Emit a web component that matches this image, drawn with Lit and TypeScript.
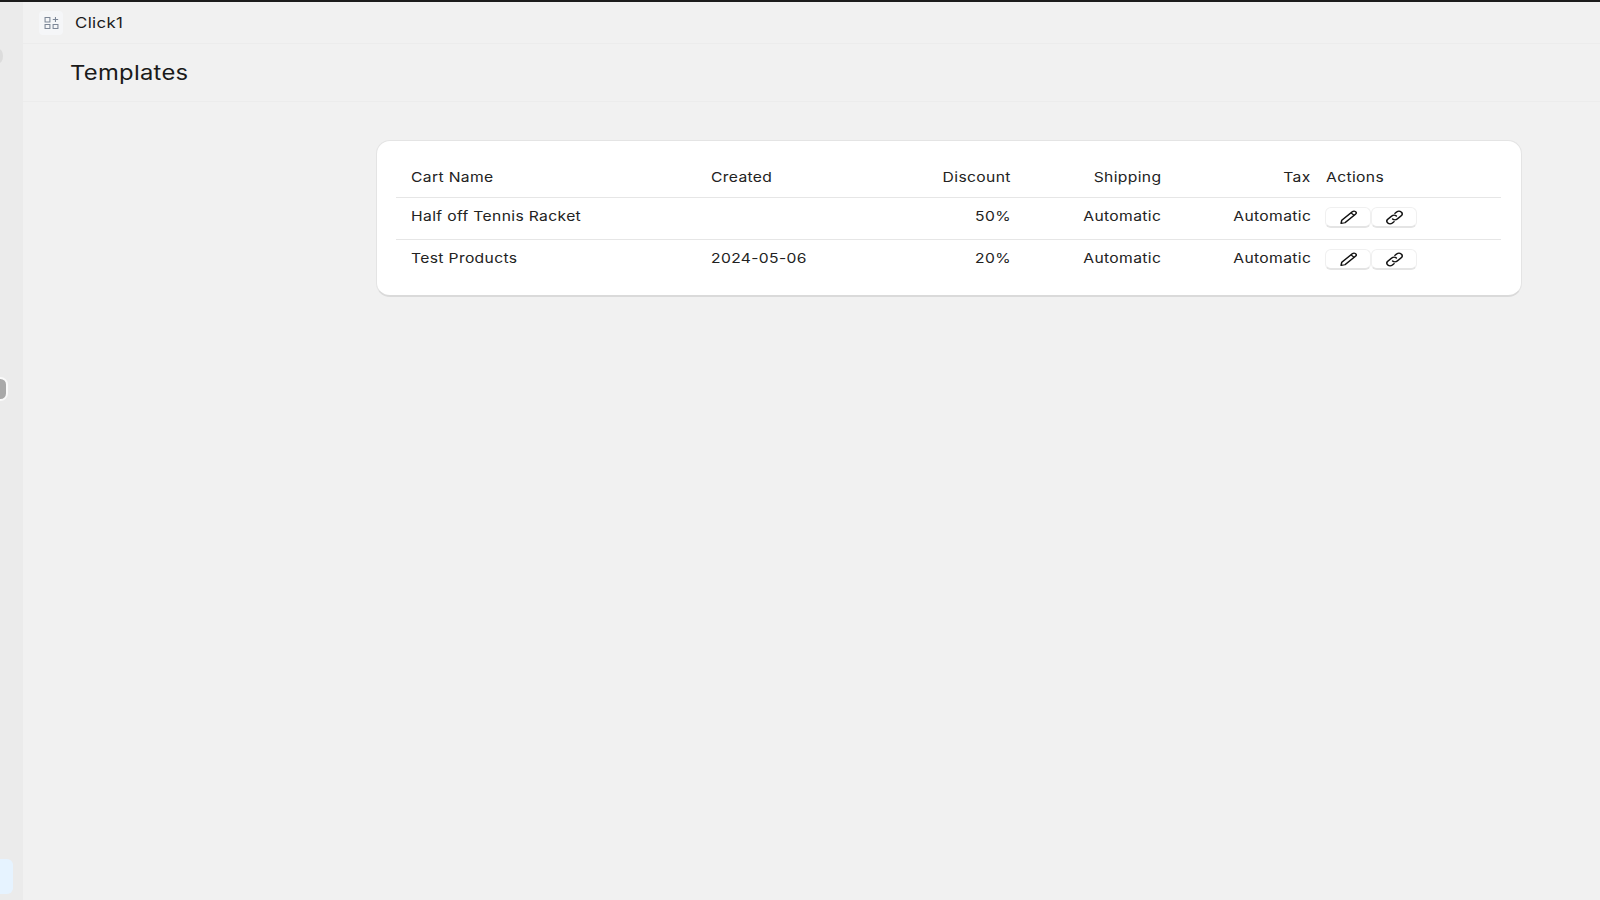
import { LitElement, html, css, svg } from "lit";
import { customElement } from "lit/decorators.js";

const pencil = svg`<path d="M3.6 13.2 2.9 16.9 6.6 16.2 16.6 6.2C17.6 5.2 17.6 4 16.7 3.1 15.8 2.2 14.6 2.2 13.6 3.2Z" fill="none" stroke="currentColor" stroke-width="1.4" stroke-linejoin="round"/><path d="M12.4 4.5 15.4 7.5" fill="none" stroke="currentColor" stroke-width="1.4"/>`;
const link = svg`<path d="M8.2 11.8C9.4 13 11.4 13 12.6 11.8L16.4 8C17.7 6.7 17.7 4.8 16.4 3.6 15.2 2.4 13.3 2.4 12 3.6L10.4 5.2" fill="none" stroke="currentColor" stroke-width="1.5" stroke-linecap="round"/><path d="M11.8 8.2C10.6 7 8.6 7 7.4 8.2L3.6 12C2.3 13.3 2.3 15.2 3.6 16.4 4.8 17.6 6.7 17.6 8 16.4L9.6 14.8" fill="none" stroke="currentColor" stroke-width="1.5" stroke-linecap="round"/>`;

const rows = [
  { name: "Half off Tennis Racket", created: "", discount: "50%" },
  { name: "Test Products", created: "2024-05-06", discount: "20%" },
];

@customElement("app-root")
export class AppRoot extends LitElement {
  static styles = css`
    :host {
      display: block;
      width: 1600px;
      height: 900px;
      overflow: hidden;
      background: #f1f1f1;
      font-family: Inter, "Liberation Sans", sans-serif;
      color: #1a1a1a;
    }
    .topline { height: 2px; background: #1c1c1c; }
    .shell { display: flex; height: 898px; }
    .rail {
      position: relative;
      width: 23px;
      flex: none;
      background: #ebebeb;
    }
    .dot {
      position: absolute; left: -5px; top: 47px;
      width: 8px; height: 14px; border-radius: 50%; background: #dcdcdc;
    }
    .handle {
      position: absolute; left: -7px; top: 375px;
      width: 11px; height: 20px; border-radius: 8px;
      background: #a9a9a9; border: 2px solid #fafafa;
    }
    .active {
      position: absolute; left: -8px; top: 857px;
      width: 21px; height: 35px; border-radius: 6px; background: #e6f3ff;
    }
    .main { flex: 1; display: flex; flex-direction: column; min-width: 0; }
    .appbar {
      height: 42px;
      box-sizing: border-box;
      display: flex;
      align-items: center;
      padding-left: 16px;
      gap: 12px;
      border-bottom: 1px solid #ececec;
    }
    .appicon {
      width: 24px; height: 24px; border-radius: 4px; background: #f5f6f8;
      display: flex; align-items: center; justify-content: center;
      color: #7d8797;
    }
    .st {
      display: inline-block;
      transform: scaleX(1.16);
      transform-origin: left center;
      letter-spacing: 0.3px;
    }
    .num .st { transform-origin: right center; }
    .appname { font-size: 14.5px; }
    .pagehead {
      height: 58px;
      box-sizing: border-box;
      display: flex;
      align-items: center;
      padding-left: 47px;
      border-bottom: 1px solid #ececec;
    }
    h1 { margin: 0; font-size: 20.5px; font-weight: 400; }
    h1 .st { letter-spacing: 0.25px; }
    .content { padding: 38px 0 0 353px; }
    .card {
      width: 1146px;
      height: 157px;
      box-sizing: border-box;
      padding: 15px 19px 0;
      background: #fff;
      border-radius: 14px;
      border: 1px solid #e4e4e4;
      border-bottom: 2px solid #dadada;
    }
    table {
      width: 1105px;
      border-collapse: collapse;
      table-layout: fixed;
      font-size: 13.5px;
    }
    .c1 { width: 300px; }
    .c2 { width: 184px; }
    .c3 { width: 131px; }
    .c4 { width: 150px; }
    .c5 { width: 150px; }
    th, td {
      padding: 0 0 0 15px;
      font-weight: 400;
      text-align: left;
      white-space: nowrap;
      color: #222;
    }
    th { height: 41px; padding-top: 1px; box-sizing: border-box; border-bottom: 1px solid #e6e6e6; }
    td { height: 42px; padding-bottom: 5px; box-sizing: border-box; vertical-align: middle; }
    tbody tr:first-child td { border-bottom: 1px solid #e6e6e6; }
    th.num, td.num { text-align: right; padding-left: 0; }
    .btns { display: flex; margin-top: 4px; margin-left: -1px; }
    .btn {
      width: 44px; height: 18px;
      box-sizing: content-box;
      background: #fff;
      border: 1px solid #f0f0f0;
      border-bottom: 2px solid #e4e4e4;
      border-radius: 6px;
      display: flex; align-items: center; justify-content: center;
      color: #111;
    }
    .btn svg { width: 21px; height: 17px; }
    svg { display: block; }
  `;

  private t(s: string) {
    return html`<span class="st">${s}</span>`;
  }

  render() {
    return html`
      <div class="topline"></div>
      <div class="shell">
        <div class="rail">
          <div class="dot"></div>
          <div class="handle"></div>
          <div class="active"></div>
        </div>
        <div class="main">
          <div class="appbar">
            <div class="appicon">
              <svg width="15" height="14" viewBox="0 0 14 14" preserveAspectRatio="none" fill="none" stroke="currentColor" stroke-width="1">
                <rect x="1" y="1.5" width="4.5" height="4.5"/>
                <rect x="1" y="8.5" width="4.5" height="4"/>
                <rect x="8.5" y="8.5" width="4.5" height="4"/>
                <path d="M10.7 1v5M8.2 3.5h5"/>
              </svg>
            </div>
            <div class="appname">${this.t("Click1")}</div>
          </div>
          <div class="pagehead"><h1>${this.t("Templates")}</h1></div>
          <div class="content">
            <div class="card">
              <table>
                <colgroup>
                  <col class="c1" /><col class="c2" /><col class="c3" /><col class="c4" /><col class="c5" /><col />
                </colgroup>
                <thead>
                  <tr>
                    <th>${this.t("Cart Name")}</th>
                    <th>${this.t("Created")}</th>
                    <th class="num">${this.t("Discount")}</th>
                    <th class="num">${this.t("Shipping")}</th>
                    <th class="num">${this.t("Tax")}</th>
                    <th>${this.t("Actions")}</th>
                  </tr>
                </thead>
                <tbody>
                  ${rows.map(
                    (r) => html`<tr>
                      <td>${this.t(r.name)}</td>
                      <td>${this.t(r.created)}</td>
                      <td class="num">${this.t(r.discount)}</td>
                      <td class="num">${this.t("Automatic")}</td>
                      <td class="num">${this.t("Automatic")}</td>
                      <td>
                        <div class="btns">
                          <div class="btn"><svg viewBox="0 0 20 20" preserveAspectRatio="none">${pencil}</svg></div>
                          <div class="btn"><svg viewBox="0 0 20 20" preserveAspectRatio="none">${link}</svg></div>
                        </div>
                      </td>
                    </tr>`
                  )}
                </tbody>
              </table>
            </div>
          </div>
        </div>
      </div>
    `;
  }
}
